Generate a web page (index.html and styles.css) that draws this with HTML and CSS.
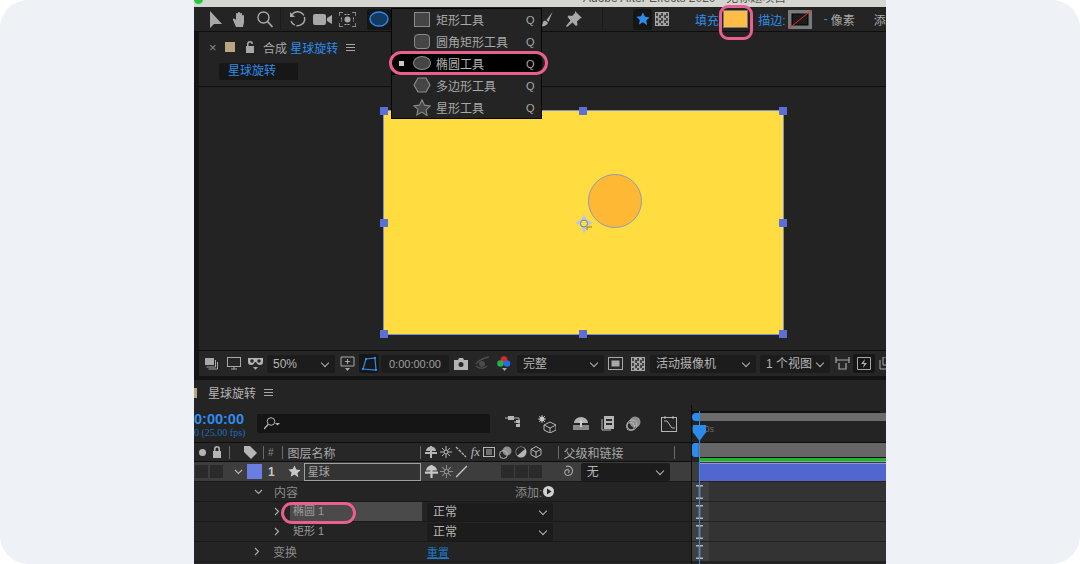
FILE: index.html
```html
<!DOCTYPE html>
<html lang="zh-CN">
<head>
  <meta charset="UTF-8">
  <title>星球旋转</title>
  <link rel="stylesheet" href="styles.css">
</head>
<body>
  <div class="shot">
    <div class="app">
      <div class="titlebar">
        <i class="traffic"></i>
        <span class="title">Adobe After Effects 2020 - 无标题项目</span>
      </div>

      <div class="toolbar">
        <svg class="ic ml-15" width="13" height="17" viewBox="0 0 13 17"><path d="M1 0v17l4-4h8z" fill="#a8a8a8"/></svg>
        <svg class="ic ml-10" width="16" height="17" viewBox="0 0 16 17"><path d="M4 16 1 9c-.6-1.500 1-2 2-1l1 1V3c0-1.400 2-1.400 2 0v-1c0-1.400 2-1.400 2 0v1c0-1.400 2-1.400 2 0v2c0-1.200 2-1.200 2 0v6c0 2-1 3-1 5z" fill="#a8a8a8"/></svg>
        <svg class="ic ml-9" width="16" height="17" viewBox="0 0 16 17"><circle cx="6.500" cy="6.500" r="5.500" fill="none" stroke="#a8a8a8" stroke-width="1.400"/><path d="m10.500 10.500 5 5.500" stroke="#a8a8a8" stroke-width="1.800"/></svg>
        <i class="tool-sep ml-7"></i>
        <svg class="ic ml-8" width="17" height="17" viewBox="0 0 17 17"><path d="M3 3.500A7 7 0 1 1 2 10" fill="none" stroke="#a8a8a8" stroke-width="1.400" stroke-dasharray="14 1.500"/><path d="M1 1v5h5z" fill="#a8a8a8"/></svg>
        <svg class="ic ml-7" width="19" height="13" viewBox="0 0 19 13"><rect y="1" width="13" height="11" rx="2" fill="#a8a8a8"/><path d="m14 5 5-3v9l-5-3z" fill="#a8a8a8"/></svg>
        <svg class="ic ml-7" width="17" height="15" viewBox="0 0 17 15"><path d="M0 4V0h4M13 0h4v4M17 11v4h-4M4 15H0v-4" fill="none" stroke="#a8a8a8" stroke-width="1.300"/><path d="M5.500 2.500h6M5.500 12.500h6M2.500 5.500v4M14.500 5.500v4" stroke="#a8a8a8" stroke-dasharray="2 1"/><circle cx="8.500" cy="7.500" r="3" fill="#a8a8a8"/></svg>
        <span class="tool-active ml-11"><svg width="20" height="16" viewBox="0 0 20 16"><ellipse cx="10" cy="8" rx="9" ry="7" fill="#123a63" stroke="#2d8ceb" stroke-width="1.400"/></svg></span>
        <svg class="ic ml-149" width="13" height="15" viewBox="0 0 13 15"><path d="m12.500 0-6 8 2 2zM6 9l2 2c-1 2.500-4 3.500-7 3 2-1 1.500-3 2-4s2-1.500 3-1z" fill="#a8a8a8"/></svg>
        <svg class="ic ml-13" width="16" height="16" viewBox="0 0 16 16"><path d="m9 0 7 7-2 .5-3 3 .5 3.500-1.500 1-3.500-3.500L1 16l-1-1 4.500-5.500L1.500 6l1-1.500L6 5l3-3z" fill="#a8a8a8"/></svg>
        <i class="tool-sep ml-20"></i>
        <span class="star-box ml-30"><svg width="14" height="14" viewBox="0 0 24 24"><path d="m12 1 3.400 7.300 7.900 1-5.800 5.400 1.500 7.900L12 17.700l-7 3.900 1.500-7.900L.7 8.300l7.900-1z" fill="#2d8ceb"/></svg></span>
        <i class="checker ml-3"></i>
        <span class="blue ml-26">填充:</span>
        <i class="fill-swatch ml-1"></i>
        <span class="blue ml-10">描边:</span>
        <svg class="ml-2" width="24" height="19" viewBox="0 0 24 19"><rect width="24" height="19" fill="#7a7a7a"/><rect x="4" y="4" width="16" height="11" fill="#1c1c1c" stroke="#000"/><path d="M0 19 24 0" stroke="#e2262c" stroke-width="1"/></svg>
        <span class="blue ml-12">-</span>
        <span class="ml-3">像素</span>
        <span class="ml-19">添加</span>
      </div>

      <div class="comp">
        <div class="comp-head">
          <span class="close">×</span>
          <i class="comp-chip"></i>
          <svg class="ic" width="10" height="12" viewBox="0 0 10 12"><path d="M2 5V3a3 3 0 0 1 6 0h-1.500a1.500 1.500 0 0 0-3 0v2zM1 5h8v7H1z" fill="#a8a8a8"/></svg>
          <span class="comp-name">合成 <b class="blue">星球旋转</b></span>
          <span class="burger"></span>
        </div>
        <div class="comp-tabs"><span class="comp-tab blue">星球旋转</span></div>

        <div class="viewer">
          <div class="stage">
            <i class="circle"></i>
            <svg class="anchor" width="20" height="20" viewBox="0 0 20 20"><path d="M10 0 13 6 19 9 13 12 10 20 7 12 1 9 7 6z" fill="#b9c4ef"/><circle cx="10" cy="9.500" r="3.500" fill="#ffdc40" stroke="#6e7fb8"/><path d="M13 13h5M13 13v3" stroke="#8a7a2a"/></svg>
            <i class="handle tl"></i><i class="handle tc"></i><i class="handle tr"></i>
            <i class="handle ml"></i><i class="handle mr"></i>
            <i class="handle bl"></i><i class="handle bc"></i><i class="handle br"></i>
          </div>
        </div>

        <div class="viewbar">
          <svg class="ic ml-6" width="13" height="12" viewBox="0 0 13 12"><path d="M0 0h9v7H0z" fill="#a8a8a8"/><path d="M10.500 2v7h-9M12.500 4v7h-9" fill="none" stroke="#a8a8a8"/></svg>
          <svg class="ic ml-9" width="14" height="13" viewBox="0 0 14 13"><rect x=".5" y=".5" width="13" height="9" fill="none" stroke="#a8a8a8"/><path d="M4 12h6M7 10v2" stroke="#a8a8a8"/></svg>
          <svg class="ic ml-7" width="15" height="14" viewBox="0 0 15 14"><path d="M0 1h15v4c0 2-1 3-3 3s-3-1-4-3H7C6 7 5 8 3 8S0 7 0 5z" fill="#b5b5b5"/><circle cx="4" cy="4" r="1.800" fill="#2a2a2a"/><circle cx="11" cy="4" r="1.800" fill="#2a2a2a"/><path d="m5 10 2.500 3 2.500-3z" fill="#a8a8a8"/></svg>
          <span class="select zoom-sel ml-4">50%</span>
          <svg class="ic ml-5" width="15" height="15" viewBox="0 0 15 15"><path d="M1 1h13v9H1z" fill="none" stroke="#a8a8a8"/><path d="M7.500 3v5M5 5.500h5" stroke="#a8a8a8"/><path d="m5 12 2.500 3 2.500-3z" fill="#a8a8a8"/></svg>
          <span class="mask-box ml-4"><svg width="15" height="14" viewBox="0 0 15 14"><path d="M4 2 13 1l1 12-13-1z" fill="none" stroke="#2d8ceb" stroke-width="1.200"/><path d="M3 1h2v2H3zM12 0h2v2h-2zM0 11h2v2H0zM13 12h2v2h-2z" fill="#2d8ceb"/></svg></span>
          <span class="timebox ml-2">0:00:00:00</span>
          <svg class="ic ml-5" width="14" height="12" viewBox="0 0 14 12"><path d="M0 2h4l1-2h4l1 2h4v10H0z" fill="#b5b5b5"/><circle cx="7" cy="6.500" r="2.500" fill="#2a2a2a"/></svg>
          <svg class="ic ml-7" width="15" height="15" viewBox="0 0 15 15"><path d="M1 8c3-5 9-6 13-7M1 10c3 3 8 3 11 0" fill="none" stroke="#4b4b4b" stroke-width="1.500"/><circle cx="7" cy="8" r="3" fill="#4b4b4b"/></svg>
          <svg class="ic ml-7" width="14" height="16" viewBox="0 0 14 16"><circle cx="7" cy="3.500" r="3.300" fill="#e02626"/><circle cx="3.500" cy="7.500" r="3.300" fill="#22b04a"/><circle cx="10" cy="7.500" r="3.300" fill="#2a6be0"/><path d="m5 12 2.500 3 2.500-3z" fill="#a8a8a8"/></svg>
          <span class="select res-sel ml-6">完整</span>
          <svg class="ic ml-4" width="15" height="13" viewBox="0 0 15 13"><rect x=".5" y=".5" width="14" height="12" fill="none" stroke="#a8a8a8"/><rect x="3.500" y="3.500" width="8" height="6" fill="#a8a8a8"/></svg>
          <i class="checker ml-8"></i>
          <span class="select cam-sel ml-5">活动摄像机</span>
          <span class="select view-sel ml-4">1 个视图</span>
          <svg class="ic ml-5" width="15" height="13" viewBox="0 0 15 13"><path d="M1 3h13M1 0v6M14 0v6M4 6v6h7V6" fill="none" stroke="#a8a8a8" stroke-width="1.200"/></svg>
          <span class="fast-box ml-3"><svg width="14" height="13" viewBox="0 0 14 13"><path d="M.5 12.500V.5h13v12z" fill="none" stroke="#a8a8a8"/><path d="M8 2 4 7h3l-1 4 4-5H7z" fill="#a8a8a8"/></svg></span>
          <svg class="ic ml-4" width="13" height="13" viewBox="0 0 13 13"><path d="M1 3v9h9M4 0h8v8H4z" fill="none" stroke="#a8a8a8"/></svg>
        </div>
      </div>

      <div class="timeline">
        <div class="tl-tab">
          <i class="tl-chip"></i>
          <span>星球旋转</span>
          <span class="burger"></span>
        </div>
        <div class="tl-body">
          <div class="tl-left">
            <div class="time-row">
              <div class="timecode">
                <b>0:00:00</b>
                <span>0 (25.00 fps)</span>
              </div>
              <div class="search">
                <svg width="16" height="13" viewBox="0 0 16 13"><circle cx="7" cy="4.500" r="3.800" fill="none" stroke="#b5b5b5"/><path d="M4 7.500 0 12" stroke="#b5b5b5" stroke-width="1.300"/><path d="m11 6 2.500 2.500L16 6z" fill="#b5b5b5"/></svg>
              </div>
              <svg class="ic ml-15" width="17" height="15" viewBox="0 0 17 15"><path d="M0 2h4M9 2h5v9M9 6h5" stroke="#b5b5b5" fill="none"/><rect x="3" y="0" width="6" height="4" fill="#b5b5b5"/><rect x="11" y="4" width="4" height="3" fill="#b5b5b5"/><rect x="11" y="8" width="4" height="3" fill="#b5b5b5"/></svg>
              <svg class="ic ml-16" width="18" height="18" viewBox="0 0 18 18"><path d="m12 7 6 3v5l-6 3-6-3v-5zM6 10l6 3 6-3M12 13v5" fill="none" stroke="#b5b5b5"/><circle cx="4" cy="4" r="2.500" fill="#c8c8c8"/><path d="M4 0v8M0 4h8M1 1l6 6M7 1 1 7" stroke="#c8c8c8" stroke-width=".8"/></svg>
              <svg class="ic ml-17" width="16" height="14" viewBox="0 0 16 14"><path d="M1 6a7 6 0 0 1 14 0z" fill="#b5b5b5"/><rect y="8" width="16" height="5" fill="#8a8a8a"/><rect x="7" y="3" width="2" height="7" fill="#d0d0d0"/></svg>
              <svg class="ic ml-11" width="14" height="15" viewBox="0 0 14 15"><rect x="4" y="0" width="10" height="13" fill="#b5b5b5"/><path d="M2 3v11h9" fill="none" stroke="#b5b5b5"/><rect x="6" y="3" width="6" height="2" fill="#2a2a2a"/><rect x="6" y="7" width="6" height="2" fill="#2a2a2a"/></svg>
              <svg class="ic ml-12" width="15" height="15" viewBox="0 0 15 15"><circle cx="9" cy="6" r="5.500" fill="#8f8f8f"/><circle cx="6" cy="9" r="5" fill="none" stroke="#b5b5b5"/><circle cx="4.500" cy="10.500" r="4" fill="none" stroke="#b5b5b5"/></svg>
              <svg class="ic ml-20" width="16" height="16" viewBox="0 0 16 16"><rect x=".5" y="1.500" width="15" height="14" fill="none" stroke="#b5b5b5"/><path d="M3 5h3l5 7h3" fill="none" stroke="#b5b5b5"/><path d="M4 0v3M12 0v3" stroke="#b5b5b5"/></svg>
            </div>

            <div class="col-head">
              <i class="dot ml-5"></i>
              <svg class="ml-6" width="10" height="12" viewBox="0 0 10 12"><path d="M2 5V3a3 3 0 0 1 6 0v2H6.500V3a1.500 1.500 0 0 0-3 0v2zM1 5h8v7H1z" fill="#b5b5b5"/></svg>
              <i class="col-sep ml-7"></i>
              <svg class="ml-14" width="13" height="13" viewBox="0 0 13 13"><path d="M0 0h6l7 7-6 6-7-7z" fill="#b5b5b5"/></svg>
              <i class="col-sep ml-6"></i>
              <span class="hash ml-4">#</span>
              <i class="col-sep ml-8"></i>
              <span class="ml-5">图层名称</span>
              <i class="col-sep ml-84"></i>
              <span class="switch-icons ml-4">
                <svg width="12" height="12" viewBox="0 0 12 12"><path d="M1 5a5 4.500 0 0 1 10 0zM0 6h12v2H0zM5 0h2v12H5z" fill="#b5b5b5"/></svg>
                <svg width="12" height="12" viewBox="0 0 12 12"><path d="M6 0v12M0 6h12M2 2l8 8M10 2l-8 8" stroke="#b5b5b5"/><circle cx="6" cy="6" r="2" fill="#272727" stroke="#b5b5b5"/></svg>
                <svg width="12" height="12" viewBox="0 0 12 12"><path d="m1 1 10 10" stroke="#b5b5b5" stroke-width="1.300" stroke-dasharray="3 1"/></svg>
                <i class="fx">fx</i>
                <svg width="12" height="12" viewBox="0 0 12 12"><rect x=".5" y="1.500" width="11" height="9" fill="none" stroke="#b5b5b5"/><path d="M3 4h6M3 6h6M3 8h6" stroke="#b5b5b5"/></svg>
                <svg width="13" height="13" viewBox="0 0 13 13"><circle cx="8" cy="5" r="4.500" fill="#8f8f8f"/><circle cx="4.500" cy="8.500" r="4" fill="none" stroke="#b5b5b5"/></svg>
                <svg width="12" height="12" viewBox="0 0 12 12"><circle cx="6" cy="6" r="5.500" fill="#b5b5b5"/><path d="M6 1a5 5 0 0 0-3.500 8.500L10 3A5 5 0 0 0 6 1z" fill="#272727"/></svg>
                <svg width="12" height="12" viewBox="0 0 12 12"><path d="m6 .5 5 2.800v5.400L6 11.500 1 8.700V3.300zM1 3.300 6 6l5-2.700M6 6v5.500" fill="none" stroke="#b5b5b5"/></svg>
              </span>
              <i class="col-sep ml-15"></i>
              <span class="ml-5">父级和链接</span>
              <i class="col-sep ml-50"></i>
            </div>

            <div class="row layer">
              <i class="sq ml-1"></i><i class="sq ml-2"></i>
              <svg class="chev ml-11" width="9" height="6" viewBox="0 0 9 6"><path d="m1 1 3.500 3.500L8 1" fill="none" stroke="#b5b5b5" stroke-width="1.200"/></svg>
              <i class="label ml-4"></i>
              <b class="num ml-6">1</b>
              <svg class="ml-13" width="13" height="13" viewBox="0 0 24 24"><path d="m12 1 3.400 7.300 7.900 1-5.800 5.400 1.500 7.900L12 17.700l-7 3.900 1.500-7.900L.7 8.300l7.900-1z" fill="#c8c8c8"/></svg>
              <span class="name-box ml-3">星球</span>
              <span class="switches ml-4">
                <svg width="13" height="13" viewBox="0 0 12 12"><path d="M1 5a5 4.500 0 0 1 10 0zM0 6h12v2H0zM5 0h2v12H5z" fill="#c8c8c8"/></svg>
                <svg width="13" height="13" viewBox="0 0 12 12"><path d="M6 0v12M0 6h12M2 2l8 8M10 2l-8 8" stroke="#8a8a8a"/><circle cx="6" cy="6" r="2" fill="#3d3d3d" stroke="#8a8a8a"/></svg>
                <svg width="13" height="13" viewBox="0 0 12 12"><path d="M1 11 11 1" stroke="#c8c8c8" stroke-width="1.200"/></svg>
              </span>
              <i class="sq ml-4"></i><i class="sq ml-1"></i><i class="sq ml-1"></i>
              <svg class="ml-19" width="14" height="14" viewBox="0 0 14 14"><path d="M7 7.500c1 0 1.500-1 1-2-.6-1.200-3-1.200-4 .5-1 2 .5 4.500 3 4.500 3 0 5-2.500 4.500-5.500C11 2 8 .5 5 1.500" fill="none" stroke="#a8a8a8" stroke-width="1.100"/></svg>
              <span class="select parent-sel ml-6">无</span>
            </div>

            <div class="row">
              <svg class="chev ml-60" width="9" height="6" viewBox="0 0 9 6"><path d="m1 1 3.500 3.500L8 1" fill="none" stroke="#a8a8a8" stroke-width="1.200"/></svg>
              <span class="dim ml-11">内容</span>
              <span class="dim add">添加:</span>
              <svg class="ml-1" width="11" height="11" viewBox="0 0 11 11"><circle cx="5.500" cy="5.500" r="5.500" fill="#d0d0d0"/><path d="M4 2.500v6l4.500-3z" fill="#242424"/></svg>
            </div>
            <div class="row">
              <svg class="chev ml-80" width="6" height="9" viewBox="0 0 6 9"><path d="m1 1 3.500 3.500L1 8" fill="none" stroke="#a8a8a8" stroke-width="1.200"/></svg>
              <span class="group-name ml-10">椭圆 1</span>
              <span class="select mode-sel ml-5">正常</span>
            </div>
            <div class="row">
              <svg class="chev ml-80" width="6" height="9" viewBox="0 0 6 9"><path d="m1 1 3.500 3.500L1 8" fill="none" stroke="#a8a8a8" stroke-width="1.200"/></svg>
              <span class="group-name plain ml-10">矩形 1</span>
              <span class="select mode-sel ml-5">正常</span>
            </div>
            <div class="row">
              <svg class="chev ml-60" width="6" height="9" viewBox="0 0 6 9"><path d="m1 1 3.500 3.500L1 8" fill="none" stroke="#a8a8a8" stroke-width="1.200"/></svg>
              <span class="dim ml-13">变换</span>
              <a class="reset">重置</a>
            </div>
          </div>

          <div class="tl-right">
            <div class="ruler">
              <div class="nav-bar"><i class="nav-knob"></i></div>
              <div class="ticks"><span>0:00s</span></div>
            </div>
            <div class="work-area"><i class="work-knob"></i></div>
            <div class="green"></div>
            <div class="track layer-track"><i class="clip"></i></div>
            <div class="track"><i class="cap"><svg width="7" height="14" viewBox="0 0 7 14"><path d="M0 .7h7M0 13.300h7M3.500 0v14" stroke="#b5b5b5" stroke-width="1.500"/></svg></i></div>
            <div class="track"><i class="cap"><svg width="7" height="14" viewBox="0 0 7 14"><path d="M0 .7h7M0 13.300h7M3.500 0v14" stroke="#b5b5b5" stroke-width="1.500"/></svg></i></div>
            <div class="track"><i class="cap"><svg width="7" height="14" viewBox="0 0 7 14"><path d="M0 .7h7M0 13.300h7M3.500 0v14" stroke="#b5b5b5" stroke-width="1.500"/></svg></i></div>
            <div class="track"><i class="cap"><svg width="7" height="14" viewBox="0 0 7 14"><path d="M0 .7h7M0 13.300h7M3.500 0v14" stroke="#b5b5b5" stroke-width="1.500"/></svg></i></div>
            <i class="playhead"></i>
            <i class="playhead-top"></i>
          </div>
        </div>
      </div>

      <div class="menu">
        <div class="menu-item"><i class="shape rect"></i><span>矩形工具</span><em>Q</em></div>
        <div class="menu-item"><i class="shape round"></i><span>圆角矩形工具</span><em>Q</em></div>
        <div class="menu-item on"><i class="bullet"></i><i class="shape oval"></i><span>椭圆工具</span><em>Q</em></div>
        <div class="menu-item"><svg class="shape-svg" width="18" height="16" viewBox="0 0 18 16"><path d="M5 1h8l4 7-4 7H5L1 8z" fill="#454545" stroke="#8a8a8a" stroke-width="1.200"/></svg><span>多边形工具</span><em>Q</em></div>
        <div class="menu-item"><svg class="shape-svg" width="18" height="17" viewBox="0 0 24 23"><path d="m12 1 3.400 7.300 7.900 1-5.800 5.400 1.500 7.900L12 17.700l-7 3.900 1.500-7.900L.7 9.300l7.900-1z" fill="#454545" stroke="#8a8a8a" stroke-width="1.500"/></svg><span>星形工具</span><em>Q</em></div>
      </div>

      <i class="mark mark-menu"></i>
      <i class="mark mark-fill"></i>
      <i class="mark mark-layer"></i>
    </div>
  </div>
</body>
</html>
```

FILE: styles.css
```css
* { box-sizing: border-box; }
html, body { margin: 0; height: 100%; background: #fff; }
body {
  font-family: "Liberation Sans", "Noto Sans CJK SC", sans-serif;
  font-size: 12px;
  color: #a8a8a8;
  overflow: hidden;
}
i { display: block; font-style: normal; }
svg { display: block; flex: none; }
.blue { color: #2d8ceb; font-weight: 400; }

.ml-1 { margin-left: 1px; } .ml-2 { margin-left: 2px; } .ml-3 { margin-left: 3px; }
.ml-4 { margin-left: 4px; } .ml-5 { margin-left: 5px; } .ml-6 { margin-left: 6px; }
.ml-7 { margin-left: 7px; } .ml-8 { margin-left: 8px; } .ml-9 { margin-left: 9px; }
.ml-10 { margin-left: 10px; } .ml-11 { margin-left: 11px; } .ml-12 { margin-left: 12px; }
.ml-13 { margin-left: 13px; } .ml-14 { margin-left: 14px; } .ml-15 { margin-left: 15px; }
.ml-16 { margin-left: 16px; } .ml-17 { margin-left: 17px; } .ml-19 { margin-left: 19px; }
.ml-20 { margin-left: 20px; } .ml-26 { margin-left: 26px; } .ml-30 { margin-left: 30px; }
.ml-50 { margin-left: 50px; } .ml-60 { margin-left: 60px; } .ml-80 { margin-left: 80px; }
.ml-84 { margin-left: 84px; } .ml-149 { margin-left: 149px; }

.shot {
  width: 1080px;
  height: 564px;
  background: #eef1f6;
  border-radius: 28px;
  display: flex;
  justify-content: center;
  overflow: hidden;
}
.app {
  position: relative;
  width: 692px;
  height: 564px;
  background: #141414;
  display: flex;
  flex-direction: column;
  overflow: hidden;
}

/* title bar, cut off by the top of the picture */
.titlebar {
  height: 7px;
  background: #d6d6d0;
  flex: none;
  position: relative;
  overflow: hidden;
}
.traffic {
  position: absolute;
  left: 0;
  top: -5px;
  width: 9px;
  height: 9px;
  border-radius: 50%;
  background: #27c93f;
}
.title {
  display: block;
  font-size: 12px;
  line-height: 12px;
  margin: -8px 0 0 389px;
  color: #555;
  white-space: nowrap;
}

.toolbar {
  height: 25px;
  flex: none;
  background: #242424;
  border-bottom: 1px solid #0e0e0e;
  display: flex;
  align-items: center;
  white-space: nowrap;
  font-size: 12px;
  overflow: hidden;
}
.toolbar > * { flex: none; }
.tool-sep { width: 1px; height: 22px; background: #1a1a1a; }
.tool-active, .star-box {
  width: 24px;
  height: 21px;
  background: #151515;
  border-radius: 2px;
  display: flex;
  align-items: center;
  justify-content: center;
}
.star-box { width: 19px; }
.checker {
  width: 14px;
  height: 14px;
  flex: none;
  border: 1px solid #a8a8a8;
  background: conic-gradient(#a0a0a0 25%, #444 0 50%, #a0a0a0 0 75%, #444 0) 0 0 / 5px 5px;
}
.fill-swatch {
  width: 25px;
  height: 18px;
  background: #ffbd45;
  border: 1px solid #7a7a7a;
}

.comp {
  height: 344px;
  flex: none;
  margin-left: 5px;
  background: #232323;
  display: flex;
  flex-direction: column;
}
.comp-head {
  height: 30px;
  flex: none;
  display: flex;
  align-items: center;
  padding-left: 10px;
  white-space: nowrap;
}
.close { width: 16px; font-size: 13px; color: #8a8a8a; }
.comp-chip { width: 10px; height: 10px; background: #b9a77f; margin-right: 10px; }
.comp-name { margin-left: 8px; }
.comp-name b { font-weight: 400; }
.burger {
  width: 9px;
  height: 7px;
  margin-left: 8px;
  border-top: 1px solid #a8a8a8;
  border-bottom: 1px solid #a8a8a8;
  background: linear-gradient(#a8a8a8, #a8a8a8) center / 100% 1px no-repeat;
}
.comp-tabs {
  height: 25px;
  flex: none;
  padding: 1px 0 0 20px;
  border-bottom: 1px solid #0e0e0e;
}
.comp-tab {
  display: block;
  width: 79px;
  height: 17px;
  line-height: 17px;
  padding-left: 9px;
  background: #171717;
  border-radius: 2px;
}

.viewer {
  flex: 1;
  border-bottom: 1px solid #0e0e0e;
  padding: 23px 0 0 184px;
}
.stage {
  position: relative;
  width: 401px;
  height: 225px;
  background: #ffdc40;
  border: 1px solid #7f8fd0;
}
.circle {
  position: absolute;
  left: 204px;
  top: 63px;
  width: 54px;
  height: 54px;
  border-radius: 50%;
  background: #ffb833;
  border: 1.500px solid #8f9bc0;
}
.anchor { position: absolute; left: 190px; top: 103px; }
.handle {
  position: absolute;
  width: 8px;
  height: 8px;
  background: #5b6fd6;
}
.handle.tl { left: -4px; top: -4px; }
.handle.tc { left: 195px; top: -4px; }
.handle.tr { right: -4px; top: -4px; }
.handle.ml { left: -4px; top: 108px; }
.handle.mr { right: -4px; top: 108px; }
.handle.bl { left: -4px; bottom: -4px; }
.handle.bc { left: 195px; bottom: -4px; }
.handle.br { right: -4px; bottom: -4px; }

.viewbar {
  height: 25px;
  flex: none;
  display: flex;
  align-items: center;
  background: #262626;
  white-space: nowrap;
  overflow: hidden;
}
.viewbar > * { flex: none; }
.select {
  position: relative;
  display: block;
  flex: none;
  height: 18px;
  line-height: 18px;
  padding-left: 6px;
  background: #1c1c1c;
  border-radius: 2px;
  color: #b5b5b5;
}
.select::after {
  content: "";
  position: absolute;
  right: 7px;
  top: 5px;
  width: 5px;
  height: 5px;
  border-right: 1px solid #b5b5b5;
  border-bottom: 1px solid #b5b5b5;
  transform: rotate(45deg);
}
.zoom-sel { width: 68px; }
.res-sel { width: 87px; }
.cam-sel { width: 106px; }
.view-sel { width: 70px; }
.parent-sel { width: 89px; }
.mode-sel { width: 126px; }
.mask-box, .fast-box {
  width: 20px;
  height: 19px;
  background: #161616;
  border-radius: 2px;
  display: flex;
  align-items: center;
  justify-content: center;
}
.fast-box { width: 22px; }
.timebox {
  width: 68px;
  height: 18px;
  line-height: 18px;
  text-align: center;
  background: #1c1c1c;
  border-radius: 2px;
  font-size: 11px;
  color: #a0a0a0;
}

.timeline {
  margin-top: 4px;
  flex: 1;
  background: #242424;
  display: flex;
  flex-direction: column;
  min-height: 0;
}
.tl-tab {
  height: 25px;
  flex: none;
  display: flex;
  align-items: center;
  color: #b5b5b5;
  white-space: nowrap;
}
.tl-chip { width: 3px; height: 10px; background: #b9a77f; margin-right: 11px; }
.tl-body { flex: 1; display: flex; min-height: 0; }
.tl-left { width: 497px; flex: none; }

.time-row {
  height: 38px;
  display: flex;
  align-items: center;
  border-bottom: 1px solid #0e0e0e;
}
.timecode { width: 63px; flex: none; line-height: 1; padding-top: 3px; }
.timecode b { display: block; font-size: 14.500px; color: #2d8ceb; }
.timecode span {
  display: block;
  margin-top: 1px;
  font: 10px "Liberation Serif", serif;
  color: #1f6db8;
}
.search {
  width: 233px;
  height: 19px;
  background: #151515;
  border-radius: 2px;
  padding: 3px 0 0 7px;
}

.col-head {
  height: 19px;
  display: flex;
  align-items: center;
  background: #272727;
  border-bottom: 1px solid #0e0e0e;
  white-space: nowrap;
}
.dot { width: 7px; height: 7px; border-radius: 50%; background: #b5b5b5; flex: none; }
.col-sep { width: 1px; height: 13px; background: #6a6a6a; flex: none; }
.hash { font-size: 10px; color: #8a8a8a; }
.switch-icons { display: flex; justify-content: space-between; align-items: center; width: 118px; }
.fx { font: italic 13px "Liberation Serif", serif; color: #b5b5b5; }

.row {
  height: 20px;
  display: flex;
  align-items: center;
  background: #242424;
  border-bottom: 1px solid #191919;
  white-space: nowrap;
}
.row.layer { background: #3d3d3d; }
.sq { width: 13px; height: 13px; background: #2a2a2a; flex: none; }
.chev { flex: none; }
.label { width: 15px; height: 15px; background: #6a7de0; flex: none; }
.num { color: #c8c8c8; }
.name-box {
  flex: none;
  width: 117px;
  height: 18px;
  line-height: 16px;
  padding-left: 3px;
  border: 1px solid #a0a0a0;
  background: #333;
  color: #a8a8a8;
  font-size: 11px;
}
.switches { display: flex; gap: 2px; width: 72px; flex: none; }
.dim { color: #8a8a8a; }
.add { margin-left: 217px; }
.group-name {
  flex: none;
  width: 132px;
  height: 19px;
  line-height: 18px;
  padding-left: 3px;
  background: #4a4a4a;
  color: #9a9a9a;
  font-size: 11px;
}
.group-name.plain { background: none; }
.reset {
  margin-left: 130px;
  color: #1f78c8;
  font-size: 11px;
  text-decoration: underline;
}

.tl-right {
  position: relative;
  flex: 1;
  background: #242424;
  border-left: 1px solid #0e0e0e;
}
.ruler { height: 38px; padding-top: 8px; background: #242424; border-bottom: 1px solid #0e0e0e; }
.nav-bar { position: relative; height: 8px; background: #6c6c6c; margin-left: 6px; box-shadow: -6px -2px 0 #111; }
.nav-knob {
  position: absolute;
  left: -6px;
  top: 0;
  width: 7px;
  height: 8px;
  border-radius: 4px 0 0 4px;
  background: #2d8ceb;
}
.ticks { font-size: 9px; line-height: 14px; margin-top: 1px; color: #6a6a6a; }
.work-area { position: relative; height: 14px; background: #666; margin-left: 6px; }
.work-knob {
  position: absolute;
  left: -6px;
  top: 0;
  width: 6px;
  height: 14px;
  border-radius: 3px 0 0 3px;
  background: #2d8ceb;
}
.green {
  height: 5px;
  margin-left: 7px;
  background: #111;
  border-top: 1px solid #111;
  border-bottom: 1px solid #999;
  box-shadow: inset 0 3px 0 #17b82c;
}
.track { height: 20px; background: #333; border-bottom: 1px solid #222; }
.layer-track { background: #3d3d3d; padding: 1px 0 0 7px; }
.clip { height: 18px; background: #5167cf; border-top: 1px solid #8a97d8; }
.cap {
  width: 17px;
  height: 19px;
  background: #3f3f3f;
  padding: 3px 0 0 4px;
}
.playhead {
  position: absolute;
  left: 7px;
  top: 6px;
  bottom: 0;
  width: 1px;
  background: #2d8ceb;
}
.playhead-top {
  position: absolute;
  left: 1px;
  top: 20px;
  width: 13px;
  height: 16px;
  background: #2d8ceb;
  clip-path: polygon(0 0, 100% 0, 100% 45%, 50% 100%, 0 45%);
}

/* dropdown opened over the toolbar */
.menu {
  position: absolute;
  left: 197px;
  top: 8px;
  width: 151px;
  height: 111px;
  background: #242424;
  border: 1px solid #050505;
  padding-bottom: 1px;
}
.menu-item {
  position: relative;
  height: 22px;
  display: flex;
  align-items: center;
  padding-left: 22px;
  color: #a8a8a8;
}
.menu-item span { margin: -2px 0 0 6px; width: 90px; }
.menu-item em { font-style: normal; font-size: 11px; color: #a8a8a8; margin-top: -1px; }
.menu-item.on { background: #000; color: #b5b5b5; }
.bullet {
  position: absolute;
  left: 7px;
  top: 8px;
  width: 5px;
  height: 5px;
  background: #c8c8c8;
}
.shape { width: 16px; height: 15px; background: #454545; border: 1px solid #8a8a8a; flex: none; margin-top: -2px; }
.shape.round { border-radius: 4px; }
.shape.oval { width: 18px; height: 14px; border-radius: 50%; margin: -2px -1px 0 -1px; }
.shape-svg { margin: -2px -1px 0 -1px; }

/* pink annotation rings */
.mark {
  position: absolute;
  border: 3px solid #e9608f;
  pointer-events: none;
}
.mark-menu { left: 195px; top: 51px; width: 159px; height: 24px; border-radius: 12px; }
.mark-fill { left: 525px; top: 5px; width: 34px; height: 35px; border-radius: 9px; }
.mark-layer { left: 87px; top: 502px; width: 75px; height: 22px; border-radius: 11px; }
```
